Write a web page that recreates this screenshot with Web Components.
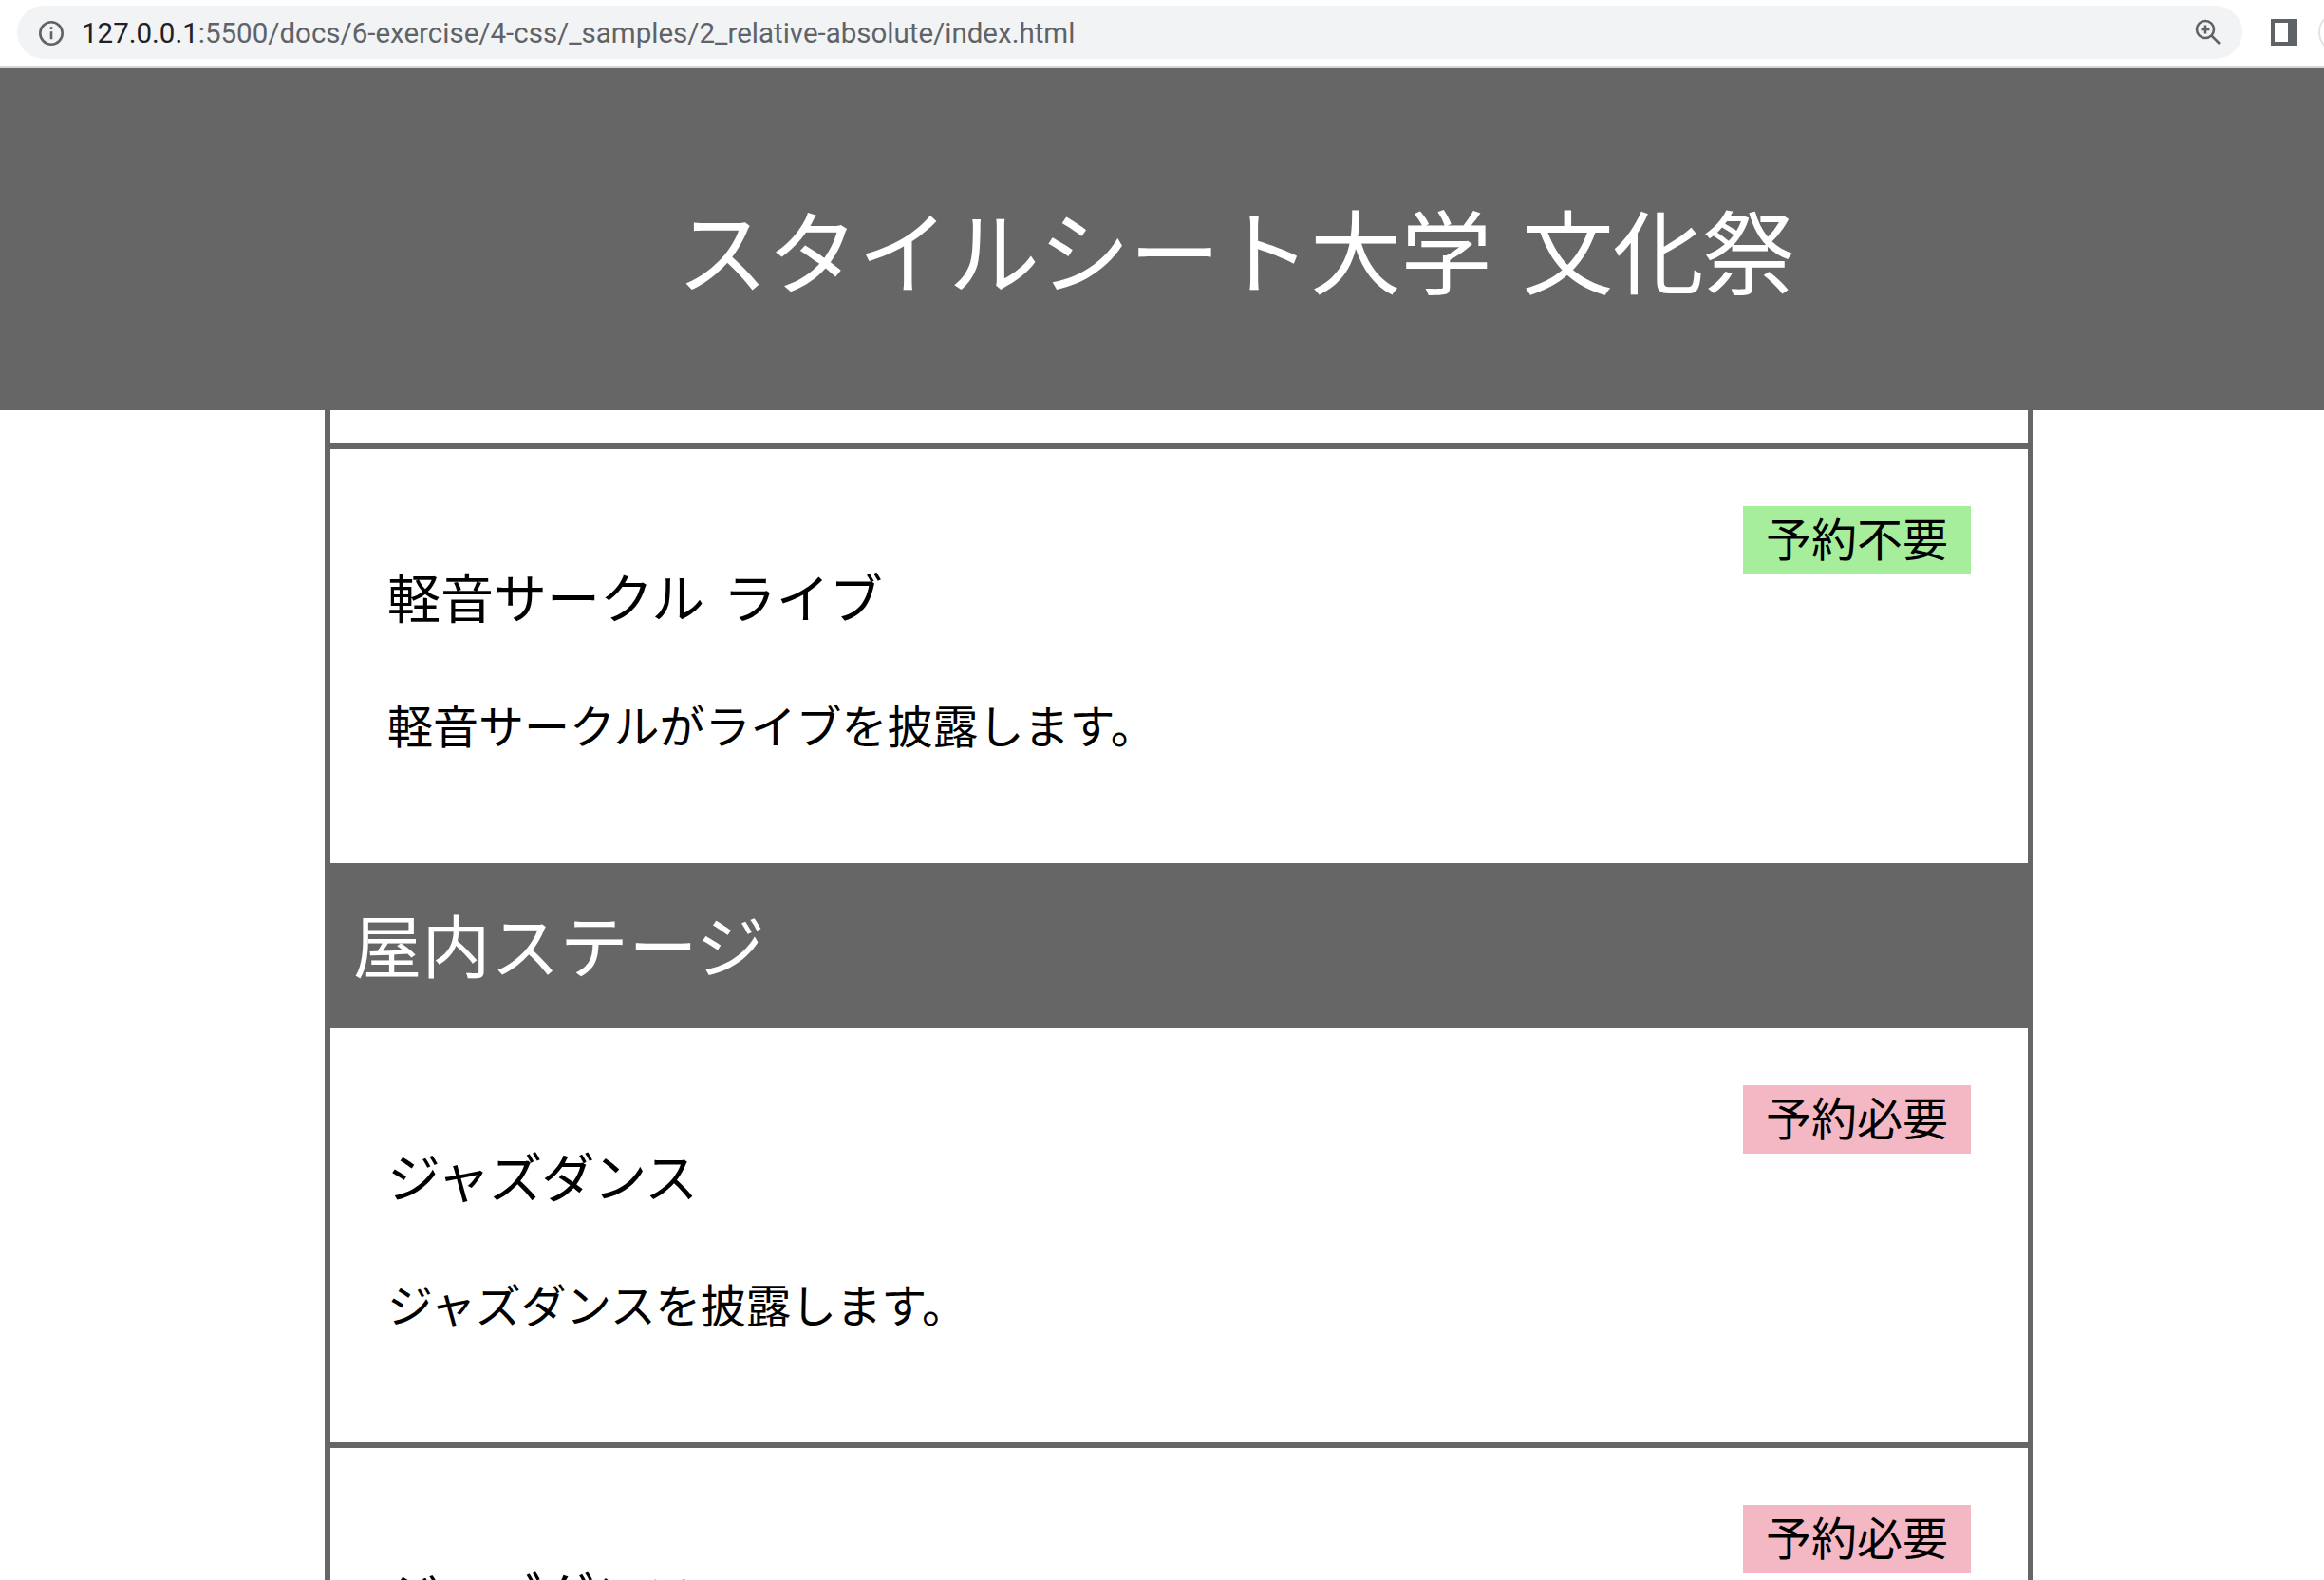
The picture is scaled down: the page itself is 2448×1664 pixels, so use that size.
<!DOCTYPE html>
<html lang="ja"><head><meta charset="utf-8"><title>スタイルシート大学 文化祭</title>
<style>
html,body{margin:0;padding:0;background:#fff;overflow:hidden;height:1664px}
body{font-family:"Noto Sans CJK JP","Noto Sans",sans-serif;display:flex;flex-direction:column}
</style></head><body>
<browser-bar host-part="127.0.0.1" path-part=":5500/docs/6-exercise/4-css/_samples/2_relative-absolute/index.html"></browser-bar>
<site-header>スタイルシート大学 文化祭</site-header>
<festival-list>
  <event-card clip badge="none"></event-card>
  <event-card badge="free" label="予約不要" title="軽音サークル ライブ" text="軽音サークルがライブを披露します。"></event-card>
  <stage-title>屋内ステージ</stage-title>
  <event-card tight badge="need" label="予約必要" title="ジャズダンス" text="ジャズダンスを披露します。"></event-card>
  <event-card tight badge="need" label="予約必要" title="ジャズダンス" text="ジャズダンスを披露します。"></event-card>
</festival-list>
<script>
function def(name, css, html){
  customElements.define(name, class extends HTMLElement{
    connectedCallback(){
      if(this.shadowRoot) return;
      const r=this.attachShadow({mode:'open'});
      r.innerHTML='<style>'+css+'</style>'+(typeof html==='function'?html(this):html);
    }
  });
}
def('browser-bar',`
:host{display:flex;align-items:center;flex:none;height:72px;box-sizing:border-box;border-bottom:2px solid #d6d6d6;background:#fff;position:relative;overflow:hidden}
.box{margin-left:18px;width:2344px;height:56px;margin-top:-2px;box-sizing:border-box;border-radius:28px;background:#f1f3f4;display:flex;align-items:center;padding:0 22px 0 22px}
.info{margin-top:2px}
.url{margin-left:18px;padding-top:2px;font:29.5px/54px Roboto,sans-serif;color:#5f6368;white-space:nowrap;flex:1}
.url b{font-weight:400;color:#202124}
.panel{margin-left:30px;width:28px;height:28px;background:#5f6368;flex:none;box-sizing:border-box;padding:4px 10px 4px 4px;margin-top:-2px}
.panel i{display:block;width:100%;height:100%;background:#fff}
.avatar{position:absolute;left:2442px;top:12px;width:44px;height:44px;border-radius:50%;border:2px solid #e3e3e3;box-sizing:border-box}
svg{display:block;flex:none}
`,h=>`<div class="box">
<svg class="info" width="28" height="28" viewBox="0 0 28 28" fill="none" stroke="#5f6368" stroke-width="2.6"><circle cx="14" cy="14" r="11.7"/><path d="M14 12.2v8"/><circle cx="14" cy="8.6" r="1.7" fill="#5f6368" stroke="none"/></svg>
<div class="url"><b>${h.getAttribute('host-part')}</b>${h.getAttribute('path-part')}</div>
<svg width="28" height="28" viewBox="0 0 28 28" fill="none" stroke="#5f6368" stroke-width="2.6"><circle cx="11" cy="11" r="9"/><path d="M17.5 17.5L26 26M11 6.5v9M6.5 11h9"/></svg>
</div><div class="panel"><i></i></div><div class="avatar"></div>`);
def('site-header',`
:host{display:flex;align-items:center;flex:none;height:360px;background:#666;color:#fff;box-sizing:border-box;padding:18px 0 0 713px}
h1{margin:0;font-size:96px;font-weight:400;line-height:140px;white-space:nowrap;word-spacing:12px;letter-spacing:-.7px}
`,`<h1><slot></slot></h1>`);
def('festival-list',`
:host{display:block;flex:none;width:1800px;margin-left:342px;box-sizing:border-box;border-left:6px solid #666;border-right:6px solid #666}
`,`<slot></slot>`);
def('stage-title',`
:host{display:flex;align-items:center;height:174px;background:#666;color:#fff;padding:0 0 6px 24px;box-sizing:border-box}
h2{margin:0;font-size:72px;font-weight:400;line-height:104px;letter-spacing:.6px}
`,`<h2><slot></slot></h2>`);
def('event-card',`
:host{display:block;position:relative;box-sizing:border-box;background:#fff;border-bottom:6px solid #666}
:host([clip]){height:41px}
:host([badge="free"]){border-bottom:0;height:436px}
:host([badge="need"]){height:442px}
.in{padding:112px 60px 0}
h3{margin:0 0 57px;font-size:56px;font-weight:400;line-height:84px;color:#000;word-spacing:7px}
p{margin:0;font-size:48px;line-height:72px;color:#000}
:host([tight]) h3{letter-spacing:-1px}
:host([tight]) p{letter-spacing:-.4px}
.tag{position:absolute;top:60px;right:60px;width:240px;height:72px;box-sizing:border-box;text-align:center;font-size:48px;line-height:64px;color:#000}
.free{background:#a6ee9c}
.need{background:#f4b8c4}
`,h=>{
  const b=h.getAttribute('badge');
  if(b==='none')return '';
  return `<div class="in"><h3>${h.getAttribute('title')}</h3><p>${h.getAttribute('text')}</p></div><span class="tag ${b}">${h.getAttribute('label')}</span>`;
});
</script>
</body></html>
